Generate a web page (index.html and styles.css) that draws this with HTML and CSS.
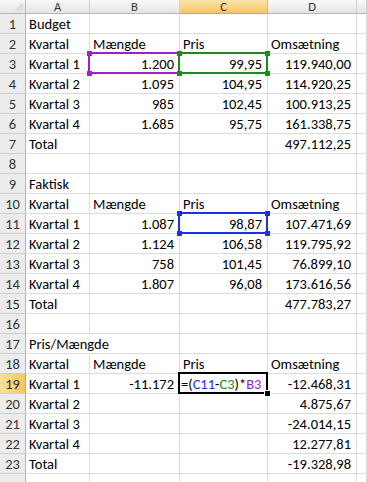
FILE: index.html
```html
<!DOCTYPE html>
<html lang="da">
<head>
<meta charset="utf-8">
<title>Pris/Mængde</title>
<link rel="stylesheet" href="styles.css">
</head>
<body>
<div class="sheet">
  <div class="corner"><span class="tri"></span></div>
  <div class="ch">A</div><div class="ch">B</div><div class="ch sel">C</div><div class="ch">D</div><div class="ch"></div>

  <div class="rh">1</div><div class="c">Budget</div><div class="c"></div><div class="c"></div><div class="c"></div><div class="c"></div>
  <div class="rh">2</div><div class="c">Kvartal</div><div class="c">Mængde</div><div class="c">Pris</div><div class="c">Omsætning</div><div class="c"></div>
  <div class="rh">3</div><div class="c">Kvartal 1</div><div class="c n">1.200<span class="ref purple"><i class="q tl"></i><i class="q tr"></i><i class="q bl"></i><i class="q br"></i></span></div><div class="c n">99,95<span class="ref green"><i class="q tl"></i><i class="q tr"></i><i class="q bl"></i><i class="q br"></i></span></div><div class="c n">119.940,00</div><div class="c"></div>
  <div class="rh">4</div><div class="c">Kvartal 2</div><div class="c n">1.095</div><div class="c n">104,95</div><div class="c n">114.920,25</div><div class="c"></div>
  <div class="rh">5</div><div class="c">Kvartal 3</div><div class="c n">985</div><div class="c n">102,45</div><div class="c n">100.913,25</div><div class="c"></div>
  <div class="rh">6</div><div class="c">Kvartal 4</div><div class="c n">1.685</div><div class="c n">95,75</div><div class="c n">161.338,75</div><div class="c"></div>
  <div class="rh">7</div><div class="c">Total</div><div class="c"></div><div class="c"></div><div class="c n">497.112,25</div><div class="c"></div>
  <div class="rh">8</div><div class="c"></div><div class="c"></div><div class="c"></div><div class="c"></div><div class="c"></div>
  <div class="rh">9</div><div class="c">Faktisk</div><div class="c"></div><div class="c"></div><div class="c"></div><div class="c"></div>
  <div class="rh">10</div><div class="c">Kvartal</div><div class="c">Mængde</div><div class="c">Pris</div><div class="c">Omsætning</div><div class="c"></div>
  <div class="rh">11</div><div class="c">Kvartal 1</div><div class="c n">1.087</div><div class="c n">98,87<span class="ref blue"><i class="q tl"></i><i class="q tr"></i><i class="q bl"></i><i class="q br"></i></span></div><div class="c n">107.471,69</div><div class="c"></div>
  <div class="rh">12</div><div class="c">Kvartal 2</div><div class="c n">1.124</div><div class="c n">106,58</div><div class="c n">119.795,92</div><div class="c"></div>
  <div class="rh">13</div><div class="c">Kvartal 3</div><div class="c n">758</div><div class="c n">101,45</div><div class="c n">76.899,10</div><div class="c"></div>
  <div class="rh">14</div><div class="c">Kvartal 4</div><div class="c n">1.807</div><div class="c n">96,08</div><div class="c n">173.616,56</div><div class="c"></div>
  <div class="rh">15</div><div class="c">Total</div><div class="c"></div><div class="c"></div><div class="c n">477.783,27</div><div class="c"></div>
  <div class="rh">16</div><div class="c"></div><div class="c"></div><div class="c"></div><div class="c"></div><div class="c"></div>
  <div class="rh">17</div><div class="c over">Pris/Mængde</div><div class="c"></div><div class="c"></div><div class="c"></div><div class="c"></div>
  <div class="rh">18</div><div class="c">Kvartal</div><div class="c">Mængde</div><div class="c">Pris</div><div class="c">Omsætning</div><div class="c"></div>
  <div class="rh sel">19</div><div class="c">Kvartal 1</div><div class="c n">-11.172</div><div class="c active">=(<span class="fb">C11</span>-<span class="fg">C3</span>)*<span class="fp">B3</span><i class="handle"></i></div><div class="c n">-12.468,31</div><div class="c"></div>
  <div class="rh">20</div><div class="c">Kvartal 2</div><div class="c"></div><div class="c"></div><div class="c n">4.875,67</div><div class="c"></div>
  <div class="rh">21</div><div class="c">Kvartal 3</div><div class="c"></div><div class="c"></div><div class="c n">-24.014,15</div><div class="c"></div>
  <div class="rh">22</div><div class="c">Kvartal 4</div><div class="c"></div><div class="c"></div><div class="c n">12.277,81</div><div class="c"></div>
  <div class="rh">23</div><div class="c">Total</div><div class="c"></div><div class="c"></div><div class="c n">-19.328,98</div><div class="c"></div>
  <div class="rh"></div><div class="c"></div><div class="c"></div><div class="c"></div><div class="c"></div><div class="c"></div>
</div>
</body>
</html>
```

FILE: styles.css
```css
html, body {
  margin: 0;
  padding: 0;
  background: #fff;
  overflow: hidden;
}
.sheet {
  display: grid;
  grid-template-columns: 26px 64px 90px 88px 89px minmax(0, 1fr);
  grid-template-rows: 14px;
  grid-auto-rows: 20px;
  width: 367px;
  overflow: hidden;
  font-family: Carlito, Lato, "Liberation Sans", sans-serif;
  font-size: 14.5px;
  color: #000;
}
.corner {
  position: relative;
  background: linear-gradient(#f7f7f7, #e6e6e6);
  border-right: 1px solid #b5b5b5;
  border-bottom: 1px solid #b5b5b5;
  box-sizing: border-box;
}
.tri {
  position: absolute;
  right: 2px;
  bottom: 2px;
  width: 0;
  height: 0;
  border-left: 9px solid transparent;
  border-bottom: 9px solid #dcdcdc;
}
.ch {
  box-sizing: border-box;
  background: linear-gradient(#f9f9f9, #e4e4e4);
  border-right: 1px solid #cfcfcf;
  border-bottom: 1px solid #b5b5b5;
  text-align: center;
  font-size: 12.5px;
  line-height: 13px;
  color: #333;
}
.ch.sel {
  background: linear-gradient(#fbe4a9, #f2c867);
  border-bottom: 1px solid #d9a73b;
  border-right: 1px solid #d9b66a;
}
.rh {
  box-sizing: border-box;
  background: #ececec;
  border-right: 1px solid #b5b5b5;
  border-bottom: 1px solid #cfcfcf;
  text-align: center;
  font-size: 14.5px;
  line-height: 20px;
  color: #333;
}
.rh.sel {
  background: linear-gradient(90deg, #fbe09a, #f3c662);
  border-right: 1px solid #d9a73b;
}
.c {
  position: relative;
  box-sizing: border-box;
  border-right: 1px solid #dadcdd;
  border-bottom: 1px solid #dadcdd;
  padding: 0 3px;
  line-height: 20px;
  white-space: nowrap;
  overflow: hidden;
}
.c.over {
  overflow: visible;
  z-index: 2;
  border-right-color: transparent;
}
.c.n {
  text-align: right;
  padding-right: 5px;
  overflow: visible;
}
.ref {
  position: absolute;
  left: -2px;
  top: -2px;
  right: -1px;
  bottom: -1px;
  border: 2px solid;
  z-index: 3;
}
.purple { border-color: #a020c8; }
.green { border-color: #1a8a1a; }
.blue { border-color: #1f2fe8; }
.q {
  position: absolute;
  width: 5px;
  height: 5px;
}
.purple .q { background: #a020c8; }
.green .q { background: #1a8a1a; }
.blue .q { background: #1f2fe8; }
.q.tl { left: -3.5px; top: -3.5px; }
.q.tr { right: -3.5px; top: -3.5px; }
.q.bl { left: -3.5px; bottom: -3.5px; }
.q.br { right: -3.5px; bottom: -3.5px; }
.active {
  overflow: visible;
  padding-left: 1px;
  z-index: 4;
}
.active::before {
  content: "";
  position: absolute;
  left: -2px;
  top: -2px;
  right: -1px;
  bottom: -1px;
  border: 2px solid #000;
  pointer-events: none;
}
.handle {
  position: absolute;
  right: -4px;
  bottom: -4px;
  width: 5px;
  height: 5px;
  background: #000;
  border: 1px solid #fff;
}
.fb { color: #1f2fe8; }
.fg { color: #1a8a1a; }
.fp { color: #a020c8; }
```
